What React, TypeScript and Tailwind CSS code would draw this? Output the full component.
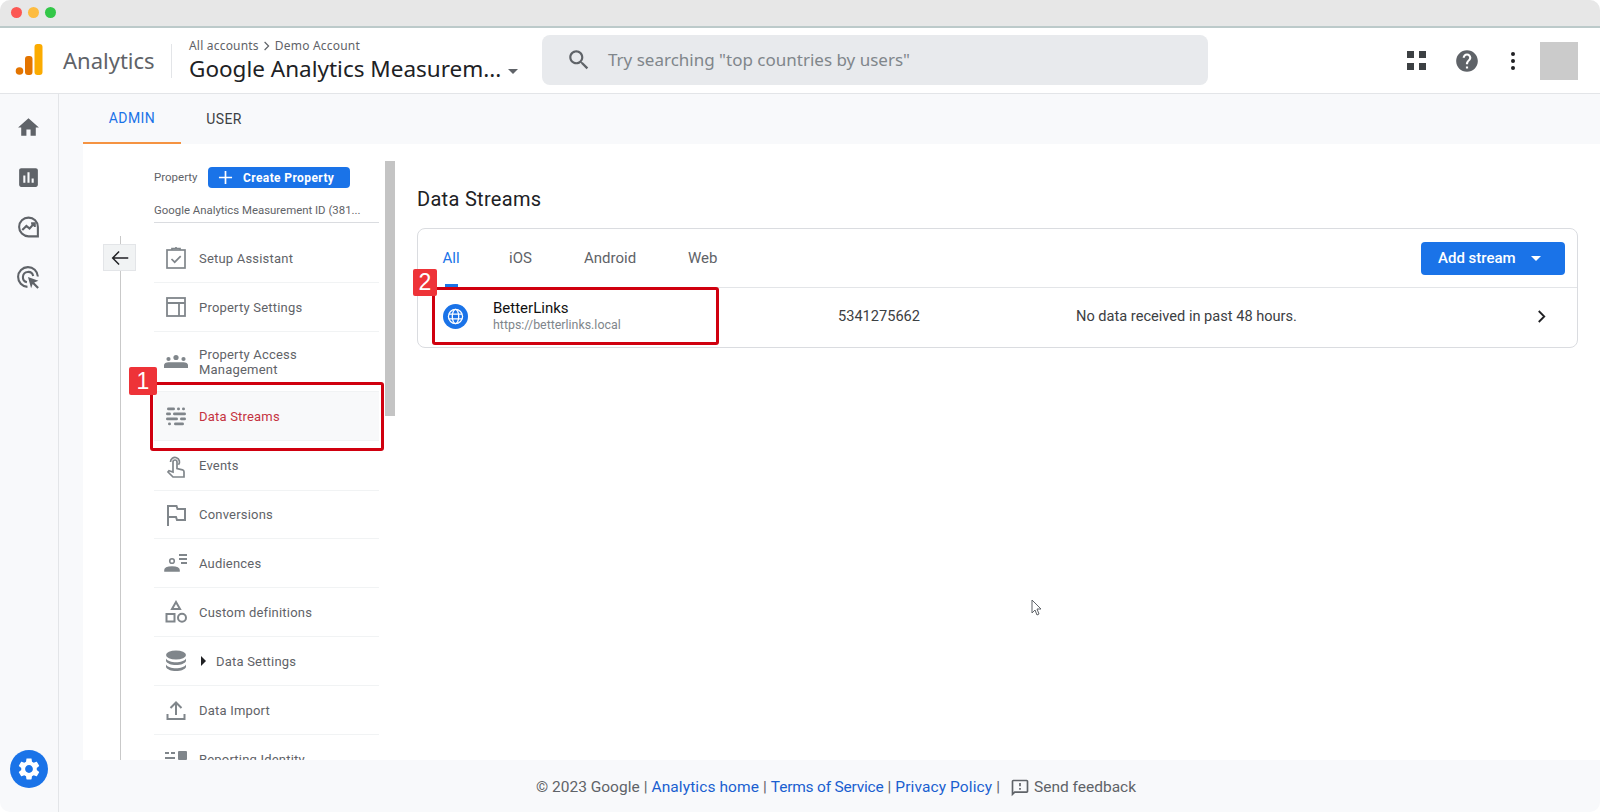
import React from "react";

const I = ({ d, className = "", box = "0 0 24 24" }: { d: string; className?: string; box?: string }) => (
  <svg viewBox={box} className={className} fill="currentColor"><path d={d} /></svg>
);

const Stroke = ({ children, className = "" }: { children: React.ReactNode; className?: string }) => (
  <svg viewBox="0 0 24 24" className={className} fill="none" stroke="currentColor" strokeWidth="2">{children}</svg>
);

const GEAR = "M19.14 12.94c.04-.3.06-.61.06-.94 0-.32-.02-.64-.07-.94l2.03-1.58c.18-.14.23-.41.12-.61l-1.92-3.32c-.12-.22-.37-.29-.59-.22l-2.39.96c-.5-.38-1.03-.7-1.62-.94l-.36-2.54c-.04-.24-.24-.41-.48-.41h-3.84c-.24 0-.43.17-.47.41l-.36 2.54c-.59.24-1.13.57-1.62.94l-2.39-.96c-.22-.08-.47 0-.59.22L2.74 8.87c-.12.21-.08.47.12.61l2.03 1.58c-.05.3-.09.63-.09.94s.02.64.07.94l-2.03 1.58c-.18.14-.23.41-.12.61l1.92 3.32c.12.22.37.29.59.22l2.39-.96c.5.38 1.03.7 1.62.94l.36 2.54c.05.24.24.41.48.41h3.84c.24 0 .44-.17.47-.41l.36-2.54c.59-.24 1.13-.56 1.62-.94l2.39.96c.22.08.47 0 .59-.22l1.92-3.32c.12-.22.07-.47-.12-.61l-2.01-1.58zM12 15.6c-1.98 0-3.6-1.62-3.6-3.6s1.62-3.6 3.6-3.6 3.6 1.62 3.6 3.6-1.62 3.6-3.6 3.6z";

const icons: Record<string, React.ReactNode> = {
  setup: (
    <Stroke className="w-[24px] h-[24px]">
      <rect x="3" y="4" width="18" height="18" strokeWidth="1.7" />
      <path d="M8 4V2.500h8V4M12 1v2M7.500 13l3.200 3.200 6-6" strokeWidth="1.700" />
    </Stroke>
  ),
  settings: (
    <Stroke className="w-[24px] h-[24px]">
      <rect x="3" y="3" width="18" height="18" strokeWidth="1.8" />
      <path d="M3 8h18M15 8v13" strokeWidth="1.800" />
    </Stroke>
  ),
  people: (
    <svg viewBox="0 0 24 24" className="w-[24px] h-[24px]" fill="currentColor">
      <circle cx="12" cy="7.500" r="2.600" /><circle cx="4.500" cy="9" r="2.100" /><circle cx="19.500" cy="9" r="2.100" />
      <path d="M0 18v-3c0-1.500 2-2.700 4.500-2.700h15c2.500 0 4.500 1.200 4.500 2.700v3z" />
    </svg>
  ),
  streams: (
    <svg viewBox="0 0 24 24" className="w-[24px] h-[24px]" fill="currentColor">
      <rect x="3" y="3.500" width="8" height="2.800" rx="1.400" /><rect x="13" y="3.500" width="3" height="2.800" rx="1.400" /><rect x="18" y="3.500" width="3" height="2.800" rx="1.400" />
      <rect x="2" y="8.500" width="5" height="2.800" rx="1.400" /><rect x="9" y="8.500" width="13" height="2.800" rx="1.400" />
      <rect x="2" y="13.500" width="12" height="2.800" rx="1.400" /><rect x="16" y="13.500" width="6" height="2.800" rx="1.400" />
      <rect x="4" y="18.500" width="3" height="2.800" rx="1.400" /><rect x="10" y="18.500" width="10" height="2.800" rx="1.400" />
    </svg>
  ),
  events: (
    <Stroke className="w-[24px] h-[24px]">
      <path d="M6.500 8a4.500 4.500 0 1 1 8 2.800M9 8a2 2 0 1 1 4 0v6.500l5.500 1.300c1 .3 1.500 1 1.500 2V23H9l-5-5 1-1.200 4 1.200z" strokeWidth="1.700" />
    </Stroke>
  ),
  flag: (
    <Stroke className="w-[24px] h-[24px]">
      <path d="M4 23V3h8.500l1 3H21v11h-8l-1-3H4" strokeWidth="2" />
    </Stroke>
  ),
  aud: (
    <svg viewBox="0 0 24 24" className="w-[24px] h-[24px]" fill="none" stroke="currentColor" strokeWidth="1.600">
      <circle cx="8" cy="10" r="2.300" />
      <path d="M1 20v-1c0-2 3-3 7-3s7 1 7 3v1z" fill="currentColor" />
      <path d="M15 4h8M15 8h8M17 12h6" strokeWidth="1.800" />
    </svg>
  ),
  custom: (
    <Stroke className="w-[24px] h-[24px]">
      <path d="M12 2l4 7H8z" strokeWidth="2" />
      <rect x="2.500" y="14" width="8" height="7.500" strokeWidth="2" />
      <circle cx="18" cy="17.800" r="4" strokeWidth="2" />
    </Stroke>
  ),
  db: (
    <svg viewBox="0 0 24 24" className="w-[24px] h-[24px]" fill="currentColor">
      <ellipse cx="12" cy="6" rx="10" ry="4.500" />
      <path d="M2 9.500c1.500 2.500 5.500 3.700 10 3.700s8.500-1.200 10-3.700v2.500c-1 2.500-5 4-10 4S3 14.500 2 12zM2 15.500c1.500 2.500 5.500 3.700 10 3.700s8.500-1.200 10-3.700v2.500c-1 2.500-5 4-10 4S3 20.500 2 18z" />
    </svg>
  ),
  upload: (
    <Stroke className="w-[24px] h-[24px]">
      <path d="M12 17V5M6.500 10L12 4.500 17.500 10M3.500 16v5h17v-5" strokeWidth="2" />
    </Stroke>
  ),
  identity: (
    <svg viewBox="0 0 24 24" className="w-[24px] h-[24px]" fill="currentColor">
      <rect x="1" y="5" width="4" height="2" /><rect x="7" y="5" width="4" height="2" /><rect x="1" y="10" width="10" height="2" />
      <rect x="14" y="4" width="9" height="9" rx="1" />
    </svg>
  ),
};

const rows = [
  { k: "setup", t: "Setup Assistant", h: "h-[49px]" },
  { k: "settings", t: "Property Settings", h: "h-[49px]" },
  { k: "people", t: "Property Access Management", h: "h-[60px]" },
  { k: "streams", t: "Data Streams", h: "h-[49px]", active: true },
  { k: "events", t: "Events", h: "h-[50px]" },
  { k: "flag", t: "Conversions", h: "h-[48px]" },
  { k: "aud", t: "Audiences", h: "h-[49px]" },
  { k: "custom", t: "Custom definitions", h: "h-[49px]" },
  { k: "db", t: "Data Settings", h: "h-[49px]", caret: true },
  { k: "upload", t: "Data Import", h: "h-[49px]" },
  { k: "identity", t: "Reporting Identity", h: "h-[49px]" },
];

export default function App() {
  return (
    <div className="relative w-[1600px] h-[812px] overflow-hidden bg-white font-['Roboto',sans-serif] text-[#3c4043]">
      <div className="flex flex-col w-full h-full rounded-[10px] overflow-hidden bg-[#f8f9fb]">
        {/* window chrome */}
        <div className="h-[28px] shrink-0 bg-[#e7e7e7] border-b-2 border-[#bccaca] flex items-center pl-[11px] gap-[6px] pb-[2px]">
          <span className="w-[11px] h-[11px] rounded-full bg-[#fc5753]" />
          <span className="w-[11px] h-[11px] rounded-full bg-[#fdbc40]" />
          <span className="w-[11px] h-[11px] rounded-full bg-[#33c748]" />
        </div>

        {/* app header */}
        <header className="h-[66px] shrink-0 bg-white border-b border-[#e3e5e8] flex items-center">
          <svg viewBox="0 0 28 32" className="w-[28px] h-[32px] ml-[15px] mb-[1px]">
            <rect x="19.500" y="0" width="8" height="31" rx="3" fill="#fbab00" />
            <rect x="10" y="12" width="7.500" height="19" rx="3" fill="#e37400" />
            <circle cx="4.500" cy="27" r="3.800" fill="#e37400" />
          </svg>
          <span className="ml-[20px] w-[108px] text-[22px] text-[#5f6368] font-['Noto_Sans',sans-serif]">Analytics</span>
          <div className="w-px h-[34px] bg-[#e3e5e8]" />
          <div className="ml-[17px] w-[320px] flex flex-col">
            <div className="flex items-center text-[12px] leading-[16px] tracking-[0.2px] text-[#5f6368] font-['Noto_Sans',sans-serif]">
              All accounts
              <svg viewBox="0 0 10 12" className="w-[8px] h-[10px] mx-[4px]" fill="none" stroke="#5f6368" strokeWidth="1.500"><path d="M2 1l5 5-5 5" /></svg>
              Demo Account
            </div>
            <div className="flex items-center mt-[1px]">
              <span className="text-[22.5px] leading-[28px] text-[#202124] font-['Noto_Sans',sans-serif] whitespace-nowrap">Google Analytics Measurem...</span>
              <span className="ml-[7px] mt-[4px] w-0 h-0 border-x-[5px] border-x-transparent border-t-[5px] border-t-[#5f6368]" />
            </div>
          </div>
          <div className="ml-[33px] w-[666px] h-[50px] rounded-[8px] bg-[#e8eaed] flex items-center pl-[24px] -mt-[1px]">
            <I className="w-[26px] h-[26px] text-[#5f6368]" d="M15.500 14h-.79l-.28-.27C15.410 12.590 16 11.110 16 9.500 16 5.910 13.090 3 9.500 3S3 5.910 3 9.500 5.910 16 9.500 16c1.610 0 3.090-.59 4.230-1.570l.27.28v.79l5 4.990L20.490 19l-4.990-5zm-6 0C7.010 14 5 11.990 5 9.500S7.010 5 9.500 5 14 7.010 14 9.500 11.990 14 9.500 14z" />
            <span className="ml-[16px] mb-[1px] text-[17px] text-[#80868b] font-['Noto_Sans',sans-serif]">Try searching "top countries by users"</span>
          </div>
          <div className="ml-[199px] grid grid-cols-2 gap-[5px]">
            <span className="w-[7px] h-[7px] bg-[#3c4043]" /><span className="w-[7px] h-[7px] bg-[#3c4043]" />
            <span className="w-[7px] h-[7px] bg-[#3c4043]" /><span className="w-[7px] h-[7px] bg-[#3c4043]" />
          </div>
          <I className="ml-[28px] w-[26px] h-[26px] text-[#5f6368]" d="M12 2C6.480 2 2 6.480 2 12s4.480 10 10 10 10-4.480 10-10S17.520 2 12 2zm1 17h-2v-2h2v2zm2.070-7.750l-.9.920C13.450 12.900 13 13.500 13 15h-2v-.5c0-1.100.45-2.100 1.170-2.830l1.240-1.260c.37-.36.59-.86.59-1.410 0-1.100-.9-2-2-2s-2 .9-2 2H8c0-2.210 1.790-4 4-4s4 1.790 4 4c0 .88-.36 1.680-.93 2.250z" />
          <div className="ml-[31px] flex flex-col gap-[3px]">
            <span className="w-[4px] h-[4px] rounded-full bg-[#202124]" />
            <span className="w-[4px] h-[4px] rounded-full bg-[#202124]" />
            <span className="w-[4px] h-[4px] rounded-full bg-[#202124]" />
          </div>
          <div className="ml-[25px] w-[38px] h-[38px] bg-[#cbcbcb]" />
        </header>

        <div className="flex-1 flex min-h-0">
          {/* rail */}
          <nav className="w-[59px] shrink-0 border-r border-[#e3e5e8] flex flex-col items-center pt-[21px] pr-px text-[#5f6368]">
            <I className="w-[25px] h-[25px]" d="M10 20v-6h4v6h5v-8h3L12 3 2 12h3v8z" />
            <I className="w-[25px] h-[25px] mt-[25px]" d="M19 3H5c-1.100 0-2 .9-2 2v14c0 1.100.9 2 2 2h14c1.100 0 2-.9 2-2V5c0-1.100-.9-2-2-2zM9 17H7v-7h2v7zm4 0h-2V7h2v10zm4 0h-2v-4h2v4z" />
            <Stroke className="w-[25px] h-[25px] mt-[25px]">
              <path d="M20 20.500H12a9 9 0 1 1 9-9v9z" strokeWidth="2" />
              <path d="M6 14.500l4-4 3 2.500 4.500-5M14.500 8h3.500v3.500" strokeWidth="2" />
            </Stroke>
            <svg viewBox="0 0 24 24" className="w-[25px] h-[25px] mt-[25px]" fill="none" stroke="currentColor" strokeWidth="2">
              <path d="M11 21a9.500 9.500 0 1 1 10-10M10.500 16.500a5 5 0 1 1 6-6" />
              <path d="M11.500 11.500l10 3.700-4 1.600 4.500 4.500-1.500 1.500-4.500-4.500-1.500 4z" fill="currentColor" stroke="none" />
            </svg>
            <div className="mt-auto mb-[24px] w-[38px] h-[38px] rounded-full bg-[#1a73e8] flex items-center justify-center">
              <I className="w-[26px] h-[26px] text-white" d={GEAR} />
            </div>
          </nav>

          <div className="flex-1 flex flex-col min-w-0">
            {/* tabs */}
            <div className="h-[50px] shrink-0 ml-[24px] flex text-[14px] tracking-[0.4px]">
              <div className="w-[98px] flex items-center justify-center pt-px text-[#1a73e8] border-b-2 border-[#f59342]">ADMIN</div>
              <div className="w-[86px] flex items-center justify-center pt-px text-[#3c4043]">USER</div>
            </div>

            <div className="flex-1 min-h-0 ml-[24px] bg-white flex overflow-hidden">
              {/* property column */}
              <aside className="relative w-[302px] shrink-0 overflow-hidden">
                <div className="absolute left-[37px] top-[92px] bottom-0 w-px bg-[#c9c9c9]" />
                <button className="absolute left-[20px] top-[100px] w-[33px] h-[27px] bg-[#f1f3f4] border border-[#e3e5e8] flex items-center justify-center">
                  <svg viewBox="0 0 24 24" className="w-[22px] h-[22px]" fill="none" stroke="#202124" strokeWidth="1.600"><path d="M21 12H4M11 5l-7 7 7 7" /></svg>
                </button>
                <div className="ml-[71px] w-[225px]">
                  <div className="flex items-center h-[45px] pt-[22px]">
                    <span className="text-[11.5px] text-[#5f6368] w-[54px]">Property</span>
                    <div className="w-[142px] h-[21px] rounded-[4px] bg-[#1a73e8] text-white flex items-center pl-[10px] text-[12px] font-bold">
                      <svg viewBox="0 0 16 16" className="w-[15px] h-[15px]" fill="none" stroke="white" strokeWidth="1.800"><path d="M8 1v14M1 8h14" /></svg>
                      <span className="ml-[10px] tracking-[0.4px]">Create Property</span>
                    </div>
                  </div>
                  <div className="h-[34px] pt-[13px] text-[11.4px] leading-[16px] text-[#5f6368] border-b border-[#dadce0] whitespace-nowrap">Google Analytics Measurement ID (381...</div>
                  <div className="mt-[11px]">
                    {rows.map((r) => (
                      <div key={r.t} className={`${r.h} flex items-center pl-[10px] border-b border-[#f1f3f4] ${r.active ? "bg-[#f8f9fa]" : ""}`}>
                        <span className="w-[24px] h-[24px] text-[#80868b] shrink-0">{icons[r.k]}</span>
                        {r.caret && <span className="ml-[13px] w-0 h-0 border-y-[5px] border-y-transparent border-l-[5px] border-l-[#202124]" />}
                        <span className={`${r.caret ? "ml-[10px]" : "ml-[11px]"} w-[150px] text-[13px] leading-[15px] tracking-[0.2px] ${r.active ? "text-[#c53340]" : "text-[#5f6368]"}`}>{r.t}</span>
                      </div>
                    ))}
                  </div>
                </div>
              </aside>

              {/* scrollbar */}
              <div className="w-[10px] h-[255px] mt-[17px] shrink-0 bg-[#c4c4c4]" />

              {/* main panel */}
              <main className="flex-1 min-w-0 pl-[22px] pr-[22px]">
                <h1 className="mt-[41px] text-[20px] leading-[28px] text-[#202124] tracking-[0.3px]">Data Streams</h1>
                <section className="mt-[15px] h-[120px] border border-[#dadce0] rounded-[8px]">
                  <div className="h-[59px] flex items-center pt-[1px] border-b border-[#e3e5e8] text-[15px] relative">
                    <span className="absolute left-[24px] w-[18px] text-center text-[#1a73e8]">All</span>
                    <span className="absolute left-[91px] text-[#5f6368]">iOS</span>
                    <span className="absolute left-[166px] text-[#5f6368]">Android</span>
                    <span className="absolute left-[270px] text-[#5f6368]">Web</span>
                    <span className="absolute left-[27px] bottom-0 w-[13px] h-[3px] bg-[#1a73e8]" />
                    <div className="ml-auto mr-[12px] -mt-[1px] w-[144px] h-[33px] rounded-[4px] bg-[#1a73e8] text-white font-medium flex items-center pl-[17px]">
                      Add stream
                      <span className="ml-[15px] w-0 h-0 border-x-[5px] border-x-transparent border-t-[5px] border-t-white" />
                    </div>
                  </div>
                  <div className="h-[59px] flex items-center pb-[2px]">
                    <div className="ml-[25px] w-[25px] h-[25px] rounded-full bg-[#1a73e8] flex items-center justify-center">
                      <svg viewBox="0 0 24 24" className="w-[17px] h-[17px]" fill="none" stroke="white" strokeWidth="1.800">
                        <circle cx="12" cy="12" r="10" /><ellipse cx="12" cy="12" rx="4.500" ry="10" /><path d="M2.500 8.500h19M2.500 15.500h19" />
                      </svg>
                    </div>
                    <div className="ml-[25px] w-[345px] flex flex-col pb-px">
                      <span className="text-[15px] leading-[17px] text-[#111]">BetterLinks</span>
                      <span className="text-[12.4px] leading-[16px] text-[#80868b]">https://betterlinks.local</span>
                    </div>
                    <span className="w-[238px] text-[14.6px] text-[#3c4043]">5341275662</span>
                    <span className="text-[14.6px] text-[#3c4043]">No data received in past 48 hours.</span>
                    <svg viewBox="0 0 12 16" className="ml-auto mr-[30px] w-[11px] h-[15px]" fill="none" stroke="#202124" strokeWidth="2"><path d="M3 2l6 6-6 6" /></svg>
                  </div>
                </section>
              </main>
            </div>

            {/* footer */}
            <footer className="h-[52px] shrink-0 flex items-center pt-[4px] pl-[477px] text-[15.5px] text-[#5f6368] whitespace-nowrap">
              <span>© 2023 Google</span>
              <span className="mx-[4px]">|</span>
              <span className="text-[#1a5fd0] tracking-[0.1px]">Analytics home</span>
              <span className="mx-[4px]">|</span>
              <span className="text-[#1a5fd0] tracking-[-0.2px]">Terms of Service</span>
              <span className="mx-[4px]">|</span>
              <span className="text-[#1a5fd0] tracking-[0.1px]">Privacy Policy</span>
              <span className="ml-[4px]">|</span>
              <I className="ml-[10px] w-[20px] h-[20px] text-[#5f6368]" d="M20 2H4c-1.100 0-2 .9-2 2v18l4-4h14c1.100 0 2-.9 2-2V4c0-1.100-.9-2-2-2zm0 14H5.170L4 17.170V4h16v12zM11 12h2v2h-2zm0-6h2v4h-2z" />
              <span className="ml-[4px]">Send feedback</span>
            </footer>
          </div>
        </div>
      </div>

      {/* annotations */}
      <div className="absolute left-[150px] top-[382px] w-[234px] h-[69px] border-[3px] border-[#d0000f] rounded-[3px]" />
      <div className="absolute left-[129px] top-[367px] w-[28px] h-[28px] bg-[#ee3338] rounded-[2px] text-white text-[23px] font-['Liberation_Sans',sans-serif] flex items-center justify-center">1</div>
      <div className="absolute left-[432px] top-[287px] w-[287px] h-[58px] border-[3px] border-[#d0000f] rounded-[3px]" />
      <div className="absolute left-[413px] top-[269px] w-[24px] h-[27px] bg-[#ee3338] rounded-[2px] text-white text-[23px] font-['Liberation_Sans',sans-serif] flex items-center justify-center">2</div>
      <svg viewBox="0 0 12 18" className="absolute left-[1031px] top-[599px] w-[12px] h-[18px]" fill="white" stroke="#5f6368" strokeWidth="1"><path d="M1 1v13l3-3 2 5 2-1-2-5h4z" /></svg>
    </div>
  );
}
